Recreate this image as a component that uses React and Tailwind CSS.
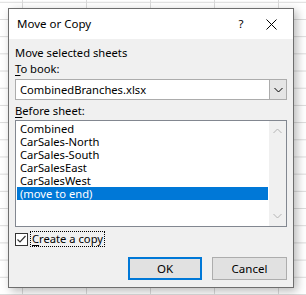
import React from "react";

const SHEETS = [
  "Combined",
  "CarSales-North",
  "CarSales-South",
  "CarSalesEast",
  "CarSalesWest",
  "(move to end)",
];

const Chevron = ({ up, color = "#000" }) => (
  <svg width="9" height="6" viewBox="0 0 9 6">
    <polyline
      points={up ? "0.5,5 4.5,1 8.5,5" : "0.5,1 4.5,5 8.5,1"}
      fill="none"
      stroke={color}
      strokeWidth="1"
    />
  </svg>
);

const MoveOrCopy = () => {
  const selected = 5;

  return (
    <div className="w-[286px] h-[280px] border border-[#6e6e6e] bg-[#f0f0f0] shadow-[3px_3px_9px_rgba(0,0,0,0.28)] flex flex-col">
      {/* title bar */}
      <div className="h-[30px] bg-white flex items-center pl-[8px] pr-[7px]">
        <span className="flex-1 text-[11.5px]">Move or Copy</span>
        <span className="w-[30px] text-center text-[11.5px]">?</span>
        <span className="w-[30px] flex justify-center">
          <svg width="11" height="11" viewBox="0 0 11 11">
            <path d="M0.5 0.5 L10.5 10.5 M10.5 0.5 L0.5 10.5" stroke="#000" strokeWidth="1" />
          </svg>
        </span>
      </div>

      <div className="flex flex-col px-[6px] text-[11.2px]">
        <div className="mt-[6px] h-[16px] leading-[16px]">Move selected sheets</div>
        <div className="h-[16px] leading-[16px]">
          <span className="underline underline-offset-2">T</span>o book:
        </div>

        <div className="mt-[2px] h-[21px] border border-[#acacac] bg-white flex">
          <span className="flex-1 pl-[4px] leading-[19px]">CombinedBranches.xlsx</span>
          <span className="w-[17px] bg-[#e5e5e5] border-l border-[#acacac] flex items-center justify-center">
            <Chevron />
          </span>
        </div>

        <div className="mt-[3px] h-[16px] leading-[16px]">
          <span className="underline underline-offset-2">B</span>efore sheet:
        </div>

        <div className="mt-[1px] h-[107px] border border-[#828790] bg-white flex">
          <ul className="flex-1 p-[1px]">
            {SHEETS.map((name, i) => (
              <li
                key={name}
                className={`h-[13px] leading-[13px] pl-[3px] ${
                  i === selected ? "bg-[#0078d7] text-white" : ""
                }`}
              >
                {name}
              </li>
            ))}
          </ul>
          <div className="w-[17px] bg-[#f0f0f0] flex flex-col justify-between items-center py-[7px]">
            <Chevron up color="#b4b4b4" />
            <Chevron color="#b4b4b4" />
          </div>
        </div>

        <div className="mt-[4px] h-[16px] flex items-center">
          <span className="w-[13px] h-[13px] border border-[#333] bg-white flex items-center justify-center">
            <svg width="11" height="11" viewBox="0 0 11 11">
              <polyline points="1.5,5.5 4,8 9.5,2" fill="none" stroke="#333" strokeWidth="1.2" />
            </svg>
          </span>
          <span className="ml-[2px] px-[1px] h-[16px] leading-[14px] border border-dotted border-black">
            <span className="underline underline-offset-2">C</span>reate a copy
          </span>
        </div>

        <div className="mt-[10px] flex justify-end gap-[10px]">
          <button className="w-[74px] h-[23px] bg-[#e1e1e1] border-2 border-[#0078d7] text-[11.5px]">
            OK
          </button>
          <button className="w-[75px] h-[23px] bg-[#e1e1e1] border border-[#adadad] text-[11.5px]">
            Cancel
          </button>
        </div>
      </div>
    </div>
  );
};

export default function App() {
  return (
    <div
      className="w-[306px] h-[295px] overflow-hidden bg-white pl-[8px] pt-[8px] text-black bg-[linear-gradient(to_right,#dadada_1px,transparent_1px),linear-gradient(to_bottom,#dadada_1px,transparent_1px)] bg-[size:64px_17.2px] bg-[position:22px_1.8px]"
      style={{ fontFamily: '"Noto Sans", "Liberation Sans", sans-serif' }}
    >
      <MoveOrCopy />
    </div>
  );
}
